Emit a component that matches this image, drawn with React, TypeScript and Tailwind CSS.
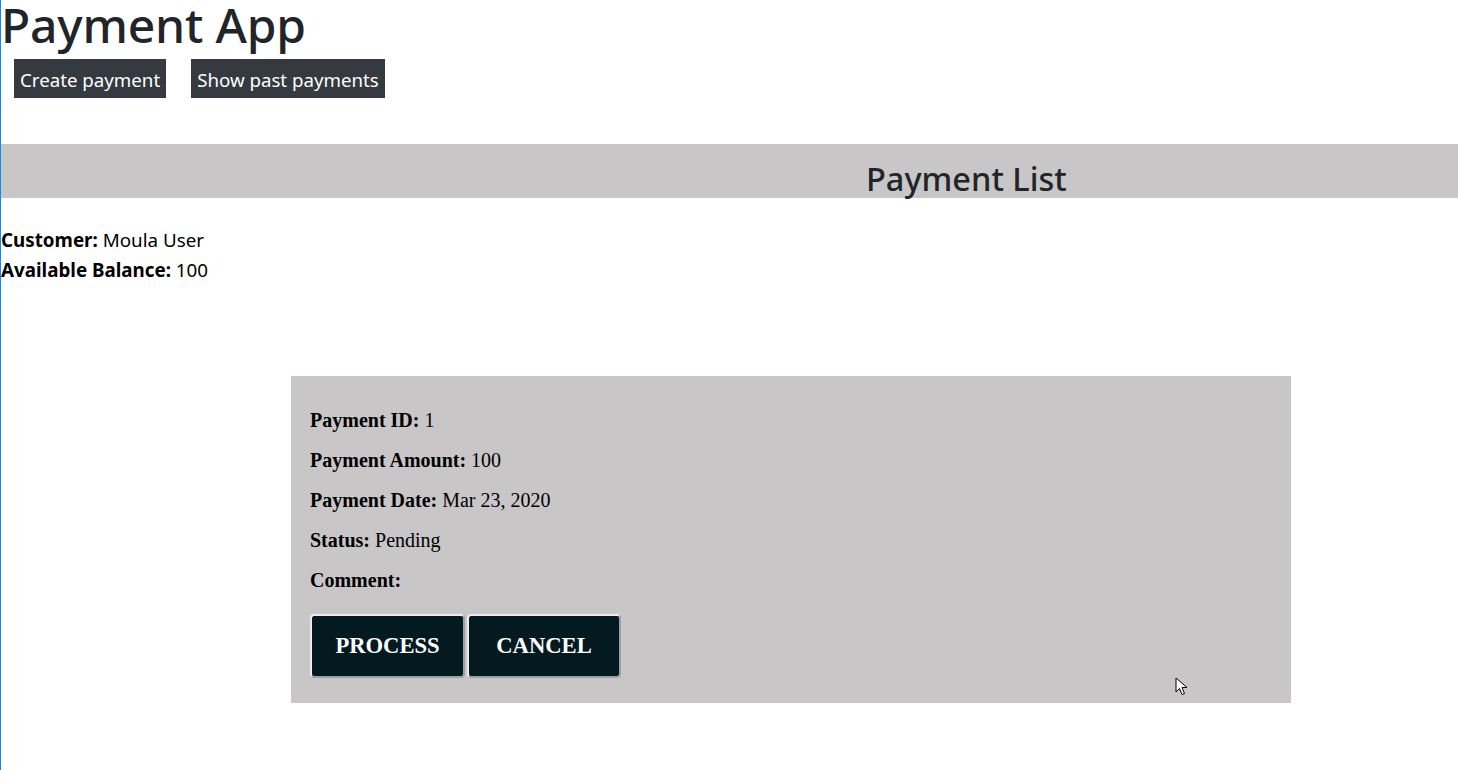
import React from "react";

const sans = "font-['Noto_Sans','Open_Sans',sans-serif]";
const serif = "font-['Liberation_Serif','Times_New_Roman',serif]";

type Payment = {
  id: number;
  amount: number;
  date: string;
  status: string;
  comment: string;
};

const payments: Payment[] = [
  { id: 1, amount: 100, date: "Mar 23, 2020", status: "Pending", comment: "" },
];

function Cursor() {
  return (
    <svg className="absolute left-[1174px] top-[677px]" width="14" height="20" viewBox="0 0 14 20">
      <path d="M1 1 L1 15 L4.5 11.5 L7 17.5 L9.5 16.5 L7 10.5 L12 10.5 Z" fill="#fff" stroke="#000" strokeWidth="1" strokeLinejoin="round" />
    </svg>
  );
}

function PaymentCard({ p }: { p: Payment }) {
  const rows: [string, string][] = [
    ["Payment ID:", String(p.id)],
    ["Payment Amount:", String(p.amount)],
    ["Payment Date:", p.date],
    ["Status:", p.status],
    ["Comment:", p.comment],
  ];
  return (
    <div className={`${serif} ml-[290px] w-[1000px] bg-[#c8c6c7] pl-[19px] pt-[24px] pb-[25px] text-[20px] text-black`}>
      {rows.map(([label, value]) => (
        <div key={label} className="h-10 leading-[40px]">
          <b>{label}</b> {value}
        </div>
      ))}
      <div className="mt-[14px] flex gap-[2px]">
        <button className="h-[64px] w-[155px] rounded-[4px] border-2 border-t-[#ececec] border-l-[#ececec] border-r-[#a0a0a0] border-b-[#a0a0a0] bg-[#021a20] text-[22.6px] font-bold text-white">
          PROCESS
        </button>
        <button className="h-[64px] w-[154px] rounded-[4px] border-2 border-t-[#ececec] border-l-[#ececec] border-r-[#a0a0a0] border-b-[#a0a0a0] bg-[#021a20] text-[22.6px] font-bold text-white">
          CANCEL
        </button>
      </div>
    </div>
  );
}

export default function App() {
  return (
    <div className={`${sans} relative min-h-[770px] border-l border-[#1a86dd] bg-white text-[#212529]`}>
      <h1 className="text-[48px] font-medium leading-[50px] tracking-[-0.2px]">Payment App</h1>
      <div className="mt-[9px] flex gap-[25px] pl-[13px]">
        <button className="h-[39px] bg-[#343a40] px-[6px] pt-[3px] text-[18.7px] leading-[36px] text-white">Create payment</button>
        <button className="h-[39px] bg-[#343a40] px-[6px] pt-[3px] text-[18.7px] leading-[36px] text-white">Show past payments</button>
      </div>

      <div className="mt-[46px] h-[54px] bg-[#c8c6c7] pl-[865px] pt-[15px]">
        <h2 className="text-[32.5px] font-medium leading-[40px]">Payment List</h2>
      </div>

      <div className="mt-[27px] text-[18.8px] leading-[30px] text-black">
        <div>
          <b>Customer:</b> Moula User
        </div>
        <div>
          <b>Available Balance:</b> 100
        </div>
      </div>

      <div className="mt-[91px]">
        {payments.map((p) => (
          <PaymentCard key={p.id} p={p} />
        ))}
      </div>
      <Cursor />
    </div>
  );
}
